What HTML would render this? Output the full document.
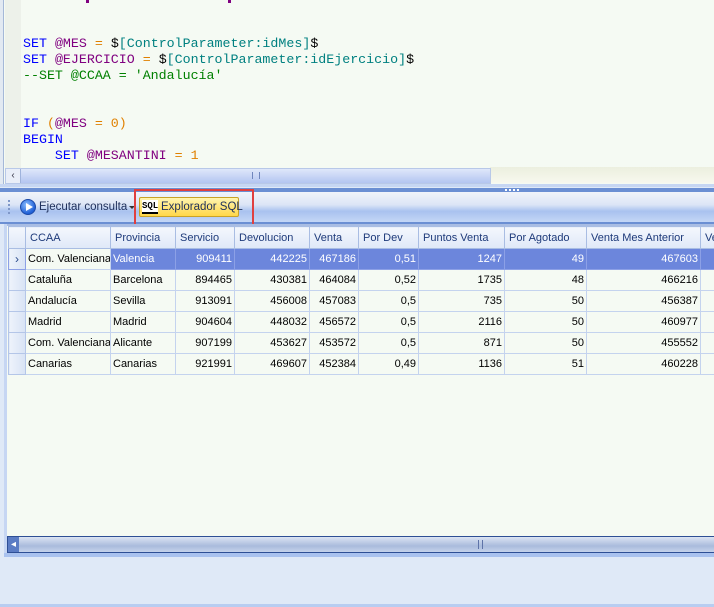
<!DOCTYPE html>
<html><head><meta charset="utf-8"><style>
*{margin:0;padding:0;box-sizing:border-box}
body{width:714px;height:607px;overflow:hidden;background:#dfe9f7;font-family:"Liberation Sans",sans-serif;position:relative}
.abs{position:absolute}
.code{font-family:"Liberation Mono",monospace;font-size:13.3px;line-height:16px;white-space:pre}
.k{color:#0000ff}.v{color:#800080}.s{color:#008080}.o{color:#e08000}.c{color:#008000}.b{color:#000}
table{border-collapse:collapse;font-size:11px;table-layout:fixed}
td{height:21px;border:1px solid #c4d3ee;padding:0 2px;white-space:nowrap;overflow:hidden;color:#000}
th{height:22px;border:1px solid #a9bde3;font-weight:normal;text-align:left;padding:0 4px;color:#1e3a7a;background:linear-gradient(#f4f7fd,#dfe8f8);white-space:nowrap;overflow:hidden}
td.r{text-align:right}
tr.sel td{background:#6c86dc;color:#fff;border-color:#8ca0e6}
td.ind{background:linear-gradient(90deg,#eef3fb,#d8e3f5);border-color:#b4c6e8;padding:0}
</style></head><body>
<!-- editor -->
<div class="abs" style="left:0;top:0;width:714px;height:186px;background:#f5faf3"></div>
<div class="abs" style="left:0;top:0;width:4px;height:186px;background:#e2e9f2;border-right:1px solid #a5b8d8"></div>
<div class="abs" style="left:5px;top:0;width:16px;height:168px;background:#edf1ea"></div>
<div class="abs" style="left:86px;top:0;width:3px;height:3px;background:#800080"></div>
<div class="abs" style="left:228px;top:0;width:3px;height:3px;background:#800080"></div>
<div class="abs code" style="left:23px;top:36px"><span class="k">SET</span> <span class="v">@MES</span> <span class="o">=</span> <span class="b">$</span><span class="s">[ControlParameter:idMes]</span><span class="b">$</span>
<span class="k">SET</span> <span class="v">@EJERCICIO</span> <span class="o">=</span> <span class="b">$</span><span class="s">[ControlParameter:idEjercicio]</span><span class="b">$</span>
<span class="c">--SET @CCAA = 'Andalucía'</span>


<span class="k">IF</span> <span class="o">(</span><span class="v">@MES</span> <span class="o">= 0)</span>
<span class="k">BEGIN</span>
    <span class="k">SET</span> <span class="v">@MESANTINI</span> <span class="o">=</span> <span class="o">1</span></div>
<div class="abs" style="left:490px;top:167px;width:224px;height:16px;background:linear-gradient(#ecefdf,#f7f8ee)"></div>
<div class="abs" style="left:5px;top:168px;width:486px;height:16px;border:1px solid #b8c8e8;background:linear-gradient(#dfe7fa,#b3c5f1)"></div>
<div class="abs" style="left:6px;top:169px;width:15px;height:14px;background:#e9eef8;border-right:1px solid #9fb3dc;font-size:10px;color:#334;text-align:center;line-height:14px">‹</div>
<div class="abs" style="left:252px;top:172px;width:8px;height:7px;border-left:1px solid #6f86bd;border-right:1px solid #6f86bd"></div>
<!-- splitter -->
<div class="abs" style="left:0;top:184px;width:714px;height:3px;background:#c6d6f3"></div>
<div class="abs" style="left:0;top:188px;width:714px;height:4px;background:#6b8fd3"></div>
<div class="abs" style="left:505px;top:189px;width:14px;height:2px;background:repeating-linear-gradient(90deg,#fff 0 2px,transparent 2px 4px)"></div>
<!-- toolbar -->
<div class="abs" style="left:0;top:192px;width:714px;height:32px;background:linear-gradient(#f1f4fa 0,#dce5f6 40%,#a9c2ef 60%,#c9daf7 100%)"></div>
<div class="abs" style="left:0;top:222px;width:714px;height:2px;background:#6b8fd3"></div>
<div class="abs" style="left:8px;top:200px;width:2px;height:16px;background:repeating-linear-gradient(#7f97c8 0 2px,transparent 2px 4px)"></div>
<div class="abs" style="left:20px;top:199px;width:16px;height:16px;border-radius:50%;background:radial-gradient(circle at 40% 35%,#8ec0ff,#1f5fd6 70%);border:1px solid #1b4aa8"></div>
<div class="abs" style="left:26px;top:203px;width:0;height:0;border-left:7px solid #fff;border-top:4px solid transparent;border-bottom:4px solid transparent"></div>
<div class="abs" style="left:39px;top:199px;font-size:11.5px;color:#1e2f5a;line-height:16px">Ejecutar consulta</div>
<div class="abs" style="left:129px;top:206px;width:0;height:0;border-top:3px solid #333;border-left:3px solid transparent;border-right:3px solid transparent"></div>
<div class="abs" style="left:134px;top:189px;width:120px;height:37px;border:2px solid #e04040"></div>
<div class="abs" style="left:139px;top:197px;width:100px;height:20px;border:1px solid #c9a227;border-radius:2px;background:linear-gradient(#fff5b0,#ffd74a)"></div>
<div class="abs" style="left:142px;top:200px;width:16px;height:14px;background:#fff;border-bottom:2px solid #000;font:bold 9px 'Liberation Mono',monospace;line-height:12px;color:#000;text-align:center">SQL</div>
<div class="abs" style="left:161px;top:199px;font-size:11.5px;color:#1e2f5a;line-height:16px">Explorador SQL</div>
<!-- grid -->
<div class="abs" style="left:4px;top:224px;width:710px;height:332px;background:#f5faf3;border-left:3px solid #c6d6f3"></div>
<div class="abs" style="left:7px;top:224px;width:707px;height:2px;background:#a9bde3"></div>
<table class="abs" style="left:8px;top:226px;width:720px">
<colgroup><col style="width:17px"><col style="width:85px"><col style="width:65px"><col style="width:59px"><col style="width:75px"><col style="width:49px"><col style="width:60px"><col style="width:86px"><col style="width:82px"><col style="width:114px"><col style="width:28px"></colgroup>
<tr><th class="ind" style="background:linear-gradient(#f4f7fd,#dfe8f8)"></th><th>CCAA</th><th>Provincia</th><th>Servicio</th><th>Devolucion</th><th>Venta</th><th>Por Dev</th><th>Puntos Venta</th><th>Por Agotado</th><th>Venta Mes Anterior</th><th>Ve</th></tr>
<tr class="sel"><td class="ind" style="color:#2a4a8a;font-size:12px;text-align:center;background:linear-gradient(90deg,#eef3fb,#d8e3f5)">›</td><td style="background:#f5faf3;color:#000;border-color:#c4d3ee">Com. Valenciana</td><td>Valencia</td><td class="r">909411</td><td class="r">442225</td><td class="r">467186</td><td class="r">0,51</td><td class="r">1247</td><td class="r">49</td><td class="r">467603</td><td></td></tr>
<tr><td class="ind"></td><td>Cataluña</td><td>Barcelona</td><td class="r">894465</td><td class="r">430381</td><td class="r">464084</td><td class="r">0,52</td><td class="r">1735</td><td class="r">48</td><td class="r">466216</td><td></td></tr>
<tr><td class="ind"></td><td>Andalucía</td><td>Sevilla</td><td class="r">913091</td><td class="r">456008</td><td class="r">457083</td><td class="r">0,5</td><td class="r">735</td><td class="r">50</td><td class="r">456387</td><td></td></tr>
<tr><td class="ind"></td><td>Madrid</td><td>Madrid</td><td class="r">904604</td><td class="r">448032</td><td class="r">456572</td><td class="r">0,5</td><td class="r">2116</td><td class="r">50</td><td class="r">460977</td><td></td></tr>
<tr><td class="ind"></td><td>Com. Valenciana</td><td>Alicante</td><td class="r">907199</td><td class="r">453627</td><td class="r">453572</td><td class="r">0,5</td><td class="r">871</td><td class="r">50</td><td class="r">455552</td><td></td></tr>
<tr><td class="ind"></td><td>Canarias</td><td>Canarias</td><td class="r">921991</td><td class="r">469607</td><td class="r">452384</td><td class="r">0,49</td><td class="r">1136</td><td class="r">51</td><td class="r">460228</td><td></td></tr>
</table>
<!-- grid scrollbar -->
<div class="abs" style="left:7px;top:536px;width:707px;height:17px;border:1px solid #2e4f95;border-right:none;background:linear-gradient(#dce4f3,#a9bbdc 60%,#c5d3ec)"></div>
<div class="abs" style="left:8px;top:537px;width:11px;height:15px;background:#5b7cc4;color:#fff;font-size:10px;line-height:15px;text-align:center">◂</div>
<div class="abs" style="left:478px;top:540px;width:5px;height:9px;border-left:1px solid #5e73a8;border-right:1px solid #5e73a8"></div>
<div class="abs" style="left:4px;top:553px;width:710px;height:4px;background:#a9c2ef"></div>
<div class="abs" style="left:0;top:604px;width:714px;height:3px;background:#b8cdf1"></div>
</body></html>
